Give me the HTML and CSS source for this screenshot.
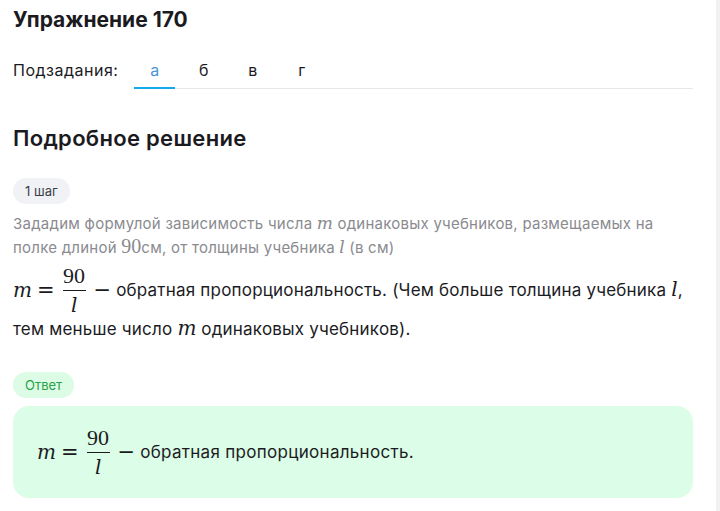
FILE: index.html
```html
<!DOCTYPE html>
<html lang="ru">
<head>
<meta charset="utf-8">
<link rel="stylesheet" href="styles.css">
</head>
<body>
<div class="frame">
  <main class="page">
    <h1 class="title">Упражнение 170</h1>
    <div class="subtasks">
      <span class="subtasks-label">Подзадания:</span>
      <nav class="tabs">
        <span class="tab active">а</span>
        <span class="tab">б</span>
        <span class="tab">в</span>
        <span class="tab">г</span>
      </nav>
    </div>
    <h2 class="section">Подробное решение</h2>
    <div class="pill step">1 шаг</div>
    <p class="hint">Зададим формулой зависимость числа <i class="mv">m</i> одинаковых учебников, размещаемых на<br>полке длиной <span class="mn">90</span>см, от толщины учебника <i class="mv">l</i> (в см)</p>
    <p class="body-text"><span class="formula"><i class="fv fm">m</i><span class="op eq">=</span><span class="frac"><span class="num">90</span><span class="den"><i class="fv">l</i></span></span><span class="op minus">−</span></span>обратная пропорциональность. (Чем больше толщина учебника <i class="tv">l</i>,<br>тем меньше число <i class="tv">m</i> одинаковых учебников).</p>
    <div class="pill answer-tag">Ответ</div>
    <div class="answer">
      <p class="answer-text"><span class="formula"><i class="fv fm">m</i><span class="op eq">=</span><span class="frac"><span class="num">90</span><span class="den"><i class="fv">l</i></span></span><span class="op minus">−</span></span>обратная пропорциональность.</p>
    </div>
  </main>
  <div class="scrollbar"></div>
</div>
</body>
</html>
```
FILE: styles.css
```css
* { box-sizing: border-box; }
html, body { margin: 0; padding: 0; background: #fff; }
body {
  font-family: "Inter", "Roboto", "Noto Sans", sans-serif;
  color: #1b1b1f;
  width: 720px;
  height: 511px;
  overflow: hidden;
}
.frame { display: flex; height: 511px; }
.page { flex: 1; padding: 0 23px 0 13px; }
.scrollbar { width: 4px; background: #f1f1f1; }

.title {
  margin: 0;
  padding-top: 5px;
  font-size: 21px;
  line-height: 30px;
  font-weight: 700;
}
.subtasks {
  display: flex;
  align-items: flex-end;
  margin-top: 23px;
  gap: 16px;
}
.subtasks-label {
  font-size: 16px;
  line-height: 24px;
  letter-spacing: 0.5px;
  padding-bottom: 7px;
}
.tabs {
  flex: 1;
  display: flex;
  gap: 8px;
  border-bottom: 1px solid #e8e8ec;
}
.tab {
  width: 41px;
  text-align: center;
  font-size: 16px;
  line-height: 24px;
  padding-bottom: 5px;
  border-bottom: 2px solid transparent;
  margin-bottom: -1px;
}
.tab.active { color: #4a94d4; border-bottom-color: #14a9ec; }

.section {
  margin: 34px 0 0;
  font-size: 22px;
  line-height: 30px;
  font-weight: 600;
  letter-spacing: 0.3px;
}
.pill {
  width: max-content;
  height: 26px;
  line-height: 26px;
  border-radius: 13px;
  padding: 0 12px;
  font-size: 13px;
}
.step { margin-top: 25px; background: #f1f2f5; color: #3b3f4a; }
.hint {
  margin: 8px 0 0;
  font-size: 15px;
  line-height: 22px;
  letter-spacing: 0.25px;
  color: #8a8a8f;
  white-space: nowrap;
}
.mv {
  font-family: "DejaVu Serif", "Liberation Serif", serif;
  font-size: 17px;
  letter-spacing: 0;
}
.mn {
  font-family: "Liberation Serif", serif;
  font-size: 20px;
  letter-spacing: 0;
}
.body-text {
  margin: 12px 0 0;
  font-size: 17px;
  line-height: 38px;
  letter-spacing: 0.2px;
  color: #1b1b1f;
  white-space: nowrap;
}
.tv {
  font-family: "DejaVu Serif", "Liberation Serif", serif;
  font-size: 20px;
  line-height: 22px;
  letter-spacing: 0;
}
.formula {
  display: inline-flex;
  align-items: center;
  vertical-align: middle;
  margin: -7px 5px -7px 0;
  letter-spacing: 0;
  line-height: 22px;
}
.fv {
  font-family: "DejaVu Serif", "Liberation Serif", serif;
  font-size: 20px;
  line-height: 22px;
}
.fm { margin-top: -3px; }
.op {
  font-family: "DejaVu Sans", sans-serif;
  font-size: 21px;
  line-height: 22px;
}
.eq { margin: -2px 0 0 5px; }
.frac {
  display: flex;
  flex-direction: column;
  align-items: center;
  width: 23px;
  margin: 0 8px;
}
.num {
  font-family: "Liberation Serif", serif;
  font-size: 22px;
  line-height: 22px;
  padding-bottom: 3px;
  border-bottom: 1px solid #1b1b1f;
  width: 100%;
  text-align: center;
}
.den { padding-top: 3px; line-height: 22px; }
.minus { margin-top: -2px; }

.answer-tag { margin-top: 24px; background: #dcfce6; color: #27a248; }
.answer {
  margin-top: 8px;
  height: 92px;
  background: #dcfde7;
  border-radius: 16px;
  display: flex;
  align-items: center;
  padding: 0 24px;
}
.answer-text {
  margin: 0;
  font-size: 17px;
  line-height: 38px;
  letter-spacing: 0.3px;
}
```
